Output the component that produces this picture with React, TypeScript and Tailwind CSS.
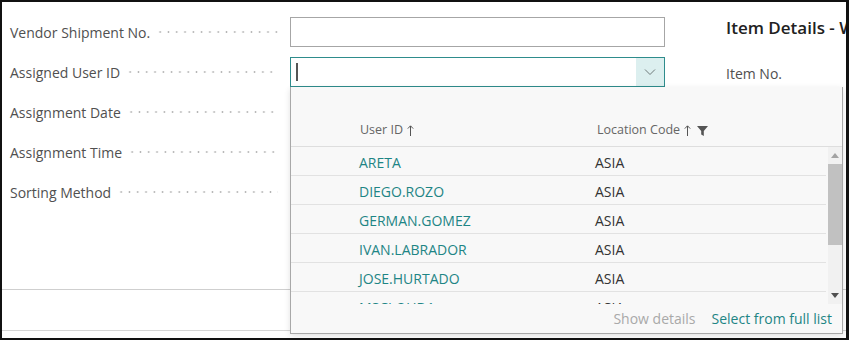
import React from "react";

const font = { fontFamily: '"Open Sans", "Noto Sans", Arial, sans-serif' };

const labels = [
  "Vendor Shipment No.",
  "Assigned User ID",
  "Assignment Date",
  "Assignment Time",
  "Sorting Method",
];

const users = [
  "ARETA",
  "DIEGO.ROZO",
  "GERMAN.GOMEZ",
  "IVAN.LABRADOR",
  "JOSE.HURTADO",
  "MSCLOUD1",
];

function Label({ text }: { text: string }) {
  return (
    <div className="flex h-[40px] items-center pl-[8px] pr-[12px]">
      <span className="whitespace-nowrap text-[14px] text-[#505050]">{text}</span>
      <span className="ml-[6px] h-[4px] flex-1 bg-[radial-gradient(circle_at_center,#b4b4b4_0.9px,transparent_1.1px)] bg-[length:8.3px_4px] bg-repeat-x" />
    </div>
  );
}

function UpArrow() {
  return (
    <svg width="7" height="11" viewBox="0 0 7 11" fill="none" className="ml-[4px]">
      <path d="M3.5 11 V1 M0.8 3.6 L3.5 0.8 L6.2 3.6" stroke="#555" strokeWidth="1" />
    </svg>
  );
}

export default function App() {
  return (
    <div
      style={font}
      className="relative h-[340px] w-[849px] overflow-hidden border-2 border-r-[3px] border-[#111] bg-white"
    >
      <div className="flex pt-[10px]">
        {/* labels */}
        <div className="w-[288px] shrink-0">
          {labels.map((l) => (
            <Label key={l} text={l} />
          ))}
        </div>
        {/* inputs */}
        <div className="w-[375px] shrink-0">
          <div className="flex h-[40px] items-center">
            <div className="h-[30px] w-full border border-[#a6a6a6] bg-white" />
          </div>
          <div className="flex h-[40px] items-center">
            <div className="flex h-[30px] w-full border border-[#2e8c8c] bg-white">
              <div className="flex flex-1 items-center pl-[5px]">
                <div className="h-[18px] w-[2px] bg-[#555]" />
              </div>
              <div className="flex w-[28px] items-center justify-center bg-[#dcefef]">
                <svg width="12" height="8" viewBox="0 0 12 8" fill="none">
                  <path d="M1 1.5 L6 6.5 L11 1.5" stroke="#6f7a7a" strokeWidth="1" />
                </svg>
              </div>
            </div>
          </div>
        </div>
        {/* right panel */}
        <div className="ml-[61px] min-w-0 flex-1 overflow-hidden whitespace-nowrap">
          <div className="pt-[5px] text-[17px] font-semibold leading-[22px] text-[#212121]">
            Item Details - Whse.
          </div>
          <div className="mt-[24px] text-[14px] text-[#505050]">Item No.</div>
        </div>
      </div>

      {/* bottom left lines */}
      <div className="absolute left-0 right-0 top-[287px] h-px bg-[#cfcfcf]" />
      <div className="absolute left-0 right-0 top-[328px] h-px bg-[#d6d6d6]" />

      {/* dropdown */}
      <div className="absolute left-[288px] top-[85px] flex h-[247px] w-[553px] flex-col border border-t-0 border-[#a8a8a8] bg-[#f8f8f8] shadow-[0_2px_6px_rgba(0,0,0,0.12)]">
        <div className="flex h-[60px] items-end border-b border-[#dedede] pb-[6px] pr-[16px] text-[12.5px] text-[#666]">
          <div className="flex w-[306px] items-center pl-[69px]">
            <span>User ID</span>
            <UpArrow />
          </div>
          <div className="flex items-center">
            <span>Location Code</span>
            <UpArrow />
            <svg width="11" height="10" viewBox="0 0 11 10" className="ml-[6px]">
              <path d="M0 0 H11 L6.8 5 V10 L4.2 8.5 V5 Z" fill="#555" />
            </svg>
          </div>
        </div>
        <div className="relative flex h-[157px] overflow-hidden">
          <div className="flex-1 pr-[2px]">
            {users.map((u) => (
              <div
                key={u}
                className="flex h-[29px] items-center border-b border-[#e2e2e2] pt-[2px] text-[14px]"
              >
                <div className="w-[304px] pl-[68px] text-[#1e8585]">{u}</div>
                <div className="text-[#333]">ASIA</div>
              </div>
            ))}
          </div>
          {/* scrollbar */}
          <div className="flex w-[14px] flex-col items-center bg-[#f1f1f1]">
            <div className="flex h-[17px] items-center justify-center">
              <svg width="8" height="5" viewBox="0 0 8 5">
                <path d="M0 5 L4 0 L8 5 Z" fill="#a3a3a3" />
              </svg>
            </div>
            <div className="h-[81px] w-[14px] bg-[#c1c1c1]" />
            <div className="flex-1" />
            <div className="flex h-[17px] items-center justify-center">
              <svg width="8" height="5" viewBox="0 0 8 5">
                <path d="M0 0 L8 0 L4 5 Z" fill="#505050" />
              </svg>
            </div>
          </div>
        </div>
        <div className="flex flex-1 items-center justify-end gap-[16px] pr-[10px] text-[14px]">
          <span className="text-[#a9a9a9]">Show details</span>
          <span className="text-[#1e8585]">Select from full list</span>
        </div>
      </div>
    </div>
  );
}
